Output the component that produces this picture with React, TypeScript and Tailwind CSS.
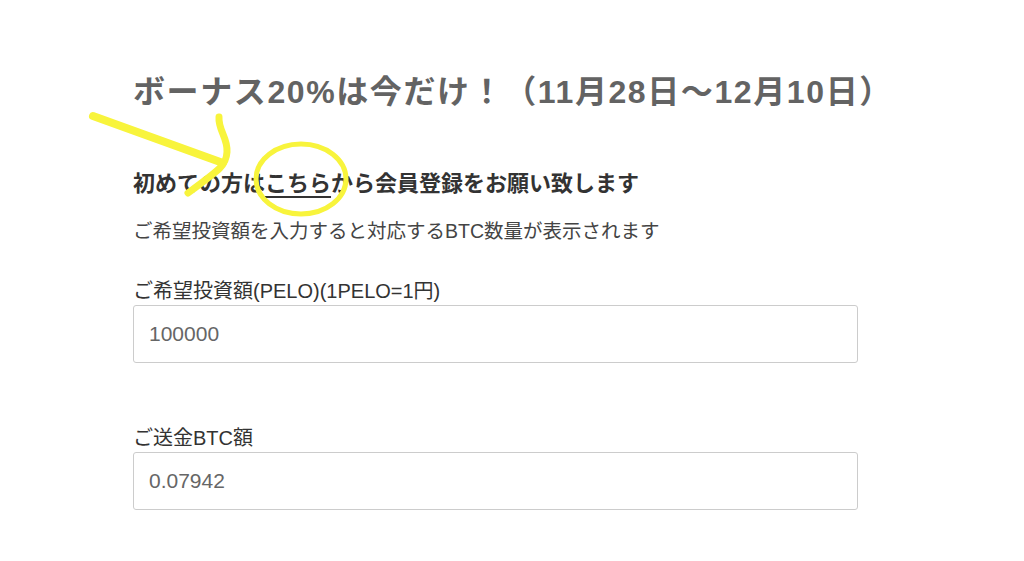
const font = "font-['Liberation_Sans','Noto_Sans_CJK_JP',sans-serif]"

function Field({ label, value }: { label: string; value: string }) {
  return (
    <div>
      <div className="h-[28px] leading-[28px] text-[20px] text-[#333]">{label}</div>
      <input
        readOnly
        value={value}
        className="block w-[725px] h-[58px] px-[15px] border border-[#cccccc] rounded-[3px] text-[21px] text-[#666] bg-white outline-none"
      />
    </div>
  )
}

export default function App() {
  return (
    <div className={`relative w-[1024px] h-[561px] bg-white overflow-hidden ${font}`}>
      <div className="pl-[133px] pt-[72px]">
        {/* Title */}
        <h1 className="h-[40px] leading-[40px] text-[32px] font-bold tracking-[1.6px] text-[#636363] whitespace-nowrap">
          ボーナス20%は今だけ！（11月28日〜12月10日）
        </h1>

        <p className="mt-[57px] h-[30px] leading-[30px] text-[22px] font-bold text-[#333] whitespace-nowrap">
          初めての方は<span className="underline underline-offset-[5px] decoration-[1.5px]">こちら</span>から会員登録をお願い致します
        </p>

        <p className="mt-[18px] h-[28px] leading-[28px] text-[19.5px] text-[#444] whitespace-nowrap">
          ご希望投資額を入力すると対応するBTC数量が表示されます
        </p>

        <div className="mt-[32px]">
          <Field label="ご希望投資額(PELO)(1PELO=1円)" value="100000" />
        </div>

        <div className="mt-[61px]">
          <Field label="ご送金BTC額" value="0.07942" />
        </div>
      </div>

      {/* yellow annotation drawn over the page */}
      <svg
        className="absolute inset-0 pointer-events-none"
        width="1024"
        height="561"
        viewBox="0 0 1024 561"
        fill="none"
      >
        <path d="M93 116 L223 163" stroke="#f8f43c" strokeWidth="8" strokeLinecap="round" />
        <path
          d="M219 117 C218 130 228 138 227 152 C226 165 222 168 188 193"
          stroke="#f8f43c"
          strokeWidth="7"
          strokeLinecap="round"
        />
        <ellipse cx="301" cy="179" rx="45" ry="35" stroke="#f8f43c" strokeWidth="5" />
      </svg>
    </div>
  )
}
